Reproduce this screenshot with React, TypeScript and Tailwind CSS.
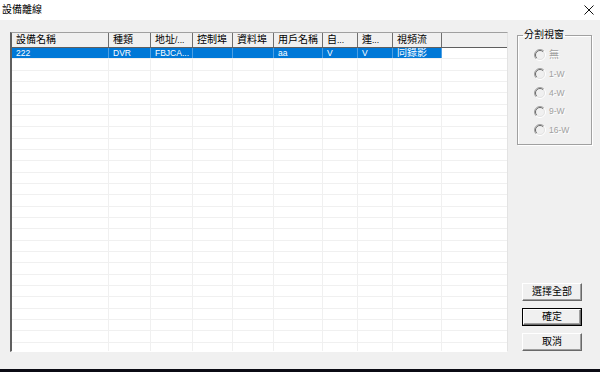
import React from "react";

const LAT = "text-[8.5px] font-['Liberation_Sans',sans-serif]";

type Col = { w: string; h: React.ReactNode; v: React.ReactNode };

const cols: Col[] = [
  { w: "w-[97px]", h: "設備名稱", v: <span className={LAT}>222</span> },
  { w: "w-[42px]", h: "種類", v: <span className={LAT}>DVR</span> },
  { w: "w-[42px]", h: <>地址<span className={LAT}>/...</span></>, v: <span className={LAT}>FBJCA...</span> },
  { w: "w-[40px]", h: "控制埠", v: "" },
  { w: "w-[41px]", h: "資料埠", v: "" },
  { w: "w-[49px]", h: "用戶名稱", v: <span className={LAT}>aa</span> },
  { w: "w-[35px]", h: <>自<span className={LAT}>...</span></>, v: <span className={LAT}>V</span> },
  { w: "w-[35px]", h: <>連<span className={LAT}>...</span></>, v: <span className={LAT}>V</span> },
  { w: "w-[49px]", h: "視頻流", v: "同錄影" },
];

function Radio({ label, latin }: { label: string; latin?: boolean }) {
  return (
    <div className="h-[18.75px] flex items-center pl-[16px] gap-[3px]">
      <svg width="12" height="12" viewBox="0 0 12 12">
        <circle cx="6" cy="6" r="4.5" fill="#f0f0f0" />
        <path d="M2.1 9.9 A5.5 5.5 0 0 1 9.9 2.1" stroke="#a0a0a0" strokeWidth="1" fill="none" />
        <path d="M2.8 9.2 A4.5 4.5 0 0 1 9.2 2.8" stroke="#696969" strokeWidth="1" fill="none" />
        <path d="M9.9 2.1 A5.5 5.5 0 0 1 2.1 9.9" stroke="#ffffff" strokeWidth="1" fill="none" />
        <path d="M9.2 2.8 A4.5 4.5 0 0 1 2.8 9.2" stroke="#e3e3e3" strokeWidth="1" fill="none" />
      </svg>
      <span className={`text-[#a0a0a0] [text-shadow:1px_1px_0_#fff] leading-none ${latin ? LAT : "text-[10px]"}`}>
        {label}
      </span>
    </div>
  );
}

function Btn({ label, def }: { label: string; def?: boolean }) {
  return (
    <div className={`h-[18px] w-[60px] ${def ? "border border-black" : ""}`}>
      <div className="h-full w-full bg-[#f0f0f0] border border-t-white border-l-white border-r-[#696969] border-b-[#696969] [box-shadow:inset_-1px_-1px_0_#a0a0a0] flex items-center justify-center text-[10px] leading-none text-black">
        {label}
      </div>
    </div>
  );
}

export default function App() {
  const rows = Array.from({ length: 28 }, (_, i) => i);
  return (
    <div className="w-[600px] h-[372px] flex flex-col overflow-hidden font-['Liberation_Sans','Noto_Sans_CJK_TC',sans-serif] text-black">
      {/* Title bar */}
      <div className="h-[20px] bg-white flex items-center justify-between pl-[2px] pr-[6px]">
        <span className="text-[10px] leading-none">設備離線</span>
        <svg width="10" height="10" viewBox="0 0 10 10">
          <path d="M0.5 0.5 L9.5 9.5 M9.5 0.5 L0.5 9.5" stroke="#111" strokeWidth="1" />
        </svg>
      </div>

      {/* Body */}
      <div className="flex-1 bg-[#f0f0f0] flex pl-[10px] pt-[12px]">
        {/* Table */}
        <div className="w-[498px] h-[320px] flex flex-col border-t border-l-2 border-r border-b border-t-[#a0a0a0] border-l-[#5f5f5f] border-r-[#e3e3e3] border-b-white bg-white overflow-hidden">
          {/* Header */}
          <div className="h-[15px] flex bg-[#f0f0f0] border-b border-b-[#5f5f5f] shrink-0">
            {cols.map((c, i) => (
              <div
                key={i}
                className={`${c.w} shrink-0 h-full border-r border-r-[#6f6f6f] flex items-center pl-[4px] text-[10px] leading-none whitespace-nowrap overflow-hidden`}
              >
                {c.h}
              </div>
            ))}
            <div className="flex-1" />
          </div>
          {/* Rows */}
          <div className="flex-1 overflow-hidden">
            {rows.map((r) => (
              <div key={r} className="h-[11.33px] flex border-b border-b-[#f0f0f0]">
                {cols.map((c, i) => (
                  <div
                    key={i}
                    className={`${c.w} shrink-0 h-full flex items-center pl-[4px] text-[10px] leading-none whitespace-nowrap overflow-hidden ${
                      r === 0
                        ? "bg-[#0078d7] text-white border-r border-r-[#4d9fe3]"
                        : "border-r border-r-[#f0f0f0]"
                    }`}
                  >
                    {r === 0 ? c.v : ""}
                  </div>
                ))}
                <div className="flex-1" />
              </div>
            ))}
          </div>
        </div>

        {/* Right panel */}
        <div className="ml-[9px] w-[75px] h-[320px] flex flex-col">
          <fieldset className="-mt-[3px] h-[116px] border border-[#a0a0a0] [box-shadow:inset_1px_1px_0_#fff,1px_1px_0_#fff] pt-[5px]">
            <legend className="ml-[5px] px-[1px] text-[10px] leading-[12px]">分割視窗</legend>
            <Radio label="無" />
            <Radio label="1-W" latin />
            <Radio label="4-W" latin />
            <Radio label="9-W" latin />
            <Radio label="16-W" latin />
          </fieldset>
          <div className="mt-auto mb-[1px] ml-[5px] flex flex-col gap-[7px]">
            <Btn label="選擇全部" />
            <Btn label="確定" def />
            <Btn label="取消" />
          </div>
        </div>
      </div>

      {/* Taskbar edge */}
      <div className="h-[3px] bg-[#0b0b14]" />
    </div>
  );
}
